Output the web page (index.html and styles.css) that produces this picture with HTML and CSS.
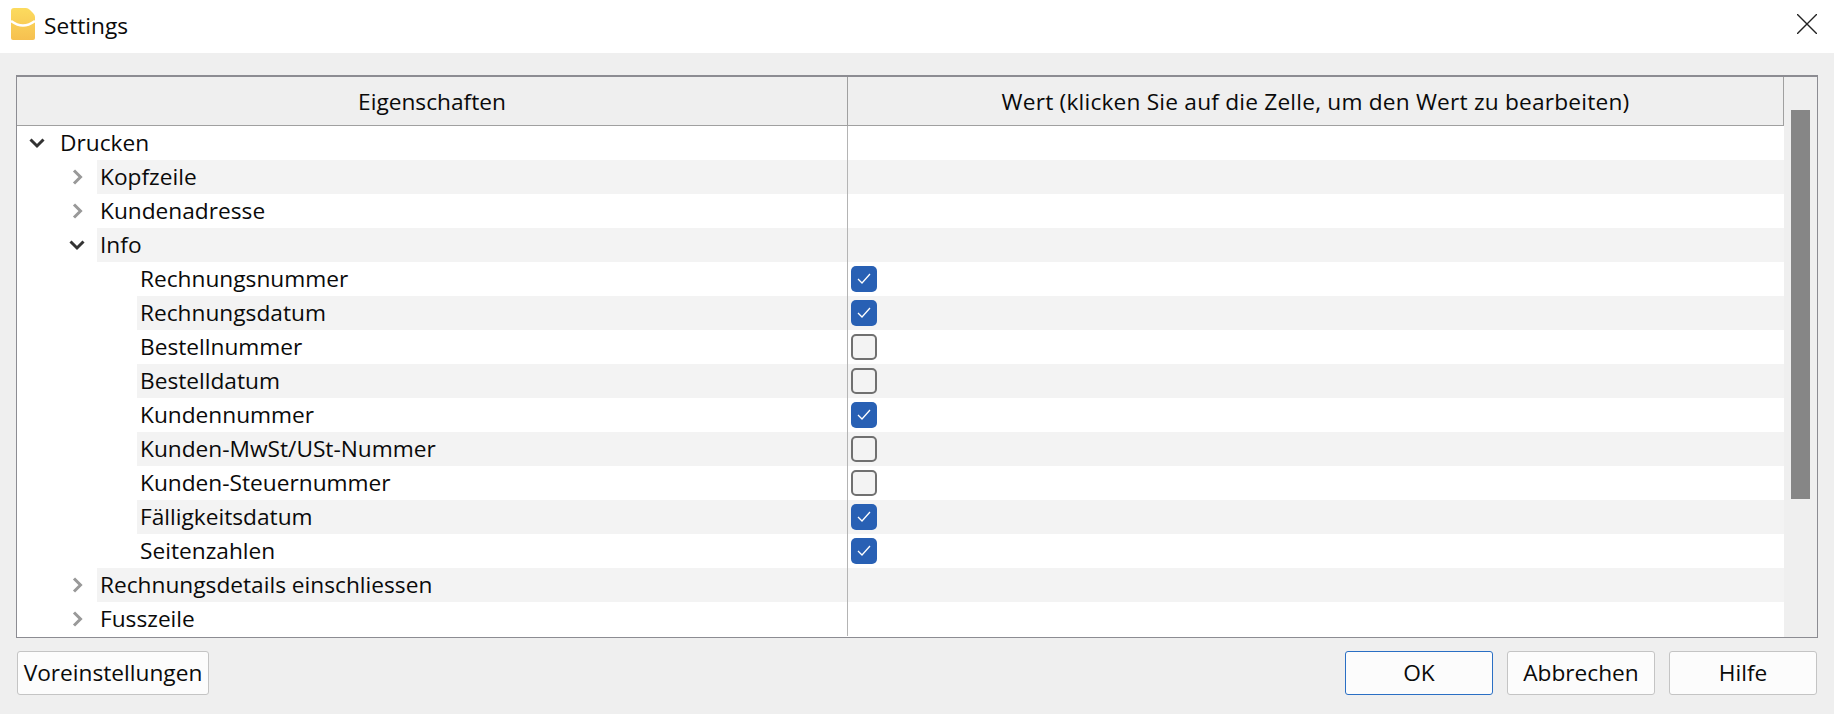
FILE: index.html
```html
<!DOCTYPE html>
<html>
<head>
  <title>Settings</title>
  <link rel="stylesheet" href="styles.css">
</head>
<body>
  <div class="titlebar">
    <svg class="app-icon" width="24" height="32" viewBox="0 0 24 32">
      <defs>
        <linearGradient id="appfill" x1="0" y1="0" x2="0" y2="1">
          <stop offset="0" stop-color="#fcdb5e"/>
          <stop offset="1" stop-color="#f6c050"/>
        </linearGradient>
      </defs>
      <path d="M3 0H15Q17 0 19 2L22 5Q24 7 24 9V30a2 2 0 0 1-2 2H2a2 2 0 0 1-2-2V3a3 3 0 0 1 3-3Z" fill="url(#appfill)"/>
      <path d="M0 13Q12 22 24 13" fill="none" stroke="#fff" stroke-width="2.5"/>
    </svg>
    <span class="title">Settings</span>
    <svg class="close" width="20" height="20" viewBox="0 0 20 20">
      <path d="M0 0L20 20M20 0L0 20" stroke="#222" stroke-width="1.4" fill="none"/>
    </svg>
  </div>

  <div class="dialog">
    <div class="table">
      <div class="main">
        <div class="head">
          <div class="col-name">Eigenschaften</div>
          <div class="col-value">Wert (klicken Sie auf die Zelle, um den Wert zu bearbeiten)</div>
        </div>
        <div class="row lvl0"><svg class="arrow open" width="18" height="16" viewBox="0 0 18 16"><path d="M2.5 4.5L9 11L15.5 4.5"/></svg><div class="name">Drucken</div><div class="value"></div></div>
        <div class="row lvl1"><svg class="arrow" width="18" height="16" viewBox="0 0 18 16"><path d="M6 1.5L12.5 8L6 14.5"/></svg><div class="name">Kopfzeile</div><div class="value"></div></div>
        <div class="row lvl1"><svg class="arrow" width="18" height="16" viewBox="0 0 18 16"><path d="M6 1.5L12.5 8L6 14.5"/></svg><div class="name">Kundenadresse</div><div class="value"></div></div>
        <div class="row lvl1"><svg class="arrow open" width="18" height="16" viewBox="0 0 18 16"><path d="M2.5 4.5L9 11L15.5 4.5"/></svg><div class="name">Info</div><div class="value"></div></div>
        <div class="row lvl2"><div class="name">Rechnungsnummer</div><div class="value"><span class="check on"><svg width="14" height="12" viewBox="0 0 14 12"><path d="M1 6L5 10L13 1"/></svg></span></div></div>
        <div class="row lvl2"><div class="name">Rechnungsdatum</div><div class="value"><span class="check on"><svg width="14" height="12" viewBox="0 0 14 12"><path d="M1 6L5 10L13 1"/></svg></span></div></div>
        <div class="row lvl2"><div class="name">Bestellnummer</div><div class="value"><span class="check"></span></div></div>
        <div class="row lvl2"><div class="name">Bestelldatum</div><div class="value"><span class="check"></span></div></div>
        <div class="row lvl2"><div class="name">Kundennummer</div><div class="value"><span class="check on"><svg width="14" height="12" viewBox="0 0 14 12"><path d="M1 6L5 10L13 1"/></svg></span></div></div>
        <div class="row lvl2"><div class="name">Kunden-MwSt/USt-Nummer</div><div class="value"><span class="check"></span></div></div>
        <div class="row lvl2"><div class="name">Kunden-Steuernummer</div><div class="value"><span class="check"></span></div></div>
        <div class="row lvl2"><div class="name">Fälligkeitsdatum</div><div class="value"><span class="check on"><svg width="14" height="12" viewBox="0 0 14 12"><path d="M1 6L5 10L13 1"/></svg></span></div></div>
        <div class="row lvl2"><div class="name">Seitenzahlen</div><div class="value"><span class="check on"><svg width="14" height="12" viewBox="0 0 14 12"><path d="M1 6L5 10L13 1"/></svg></span></div></div>
        <div class="row lvl1"><svg class="arrow" width="18" height="16" viewBox="0 0 18 16"><path d="M6 1.5L12.5 8L6 14.5"/></svg><div class="name">Rechnungsdetails einschliessen</div><div class="value"></div></div>
        <div class="row lvl1"><svg class="arrow" width="18" height="16" viewBox="0 0 18 16"><path d="M6 1.5L12.5 8L6 14.5"/></svg><div class="name">Fusszeile</div><div class="value"></div></div>
      </div>
      <div class="scrollbar"><div class="thumb"></div></div>
    </div>

    <div class="buttons">
      <button class="btn first">Voreinstellungen</button>
      <div class="right">
        <button class="btn wide default">OK</button>
        <button class="btn wide">Abbrechen</button>
        <button class="btn wide">Hilfe</button>
      </div>
    </div>
  </div>
</body>
</html>
```

FILE: styles.css
```css
* {
  box-sizing: border-box;
}

body {
  margin: 0;
  height: 714px;
  overflow: hidden;
  background-color: #efefef;
  font-family: "Open Sans", "Noto Sans", sans-serif;
  font-size: 22.7px;
  color: #0a0a0a;
}

.titlebar {
  display: flex;
  align-items: center;
  height: 53px;
  padding: 0 17px 5px 11px;
  background-color: #fff;
}

.app-icon {
  margin-right: 9px;
}

.title {
  flex: 1;
  margin-top: 3px;
  line-height: 32px;
}

.dialog {
  padding: 22px 16px 0 16px;
}

.table {
  display: flex;
  height: 563px;
  border: 1px solid #8c8c92;
  border-top-width: 2px;
  background-color: #efefef;
}

.main {
  width: 1767px;
  overflow: hidden;
  background-color: #fff;
}

.head {
  display: flex;
  height: 49px;
  border-bottom: 1px solid #a0a0a0;
  border-right: 1px solid #a0a0a0;
  background-color: #efefef;
}

.col-name {
  width: 831px;
  border-right: 1px solid #a0a0a0;
  text-align: center;
  line-height: 50px;
}

.col-value {
  flex: 1;
  text-align: center;
  line-height: 50px;
  letter-spacing: 0.2px;
}

.row {
  display: flex;
  height: 34px;
  line-height: 34px;
}

.row:nth-child(odd) .name,
.row:nth-child(odd) .value {
  background-color: #f3f3f3;
}

.name {
  flex: 1;
  white-space: nowrap;
  padding-left: 3px;
}

.value {
  display: flex;
  flex: none;
  align-items: center;
  width: 937px;
  padding-left: 3px;
  border-left: 1px solid #b4b4b4;
}

.lvl0 {
  padding-left: 11px;
}

.lvl0 .name {
  padding-left: 14px;
}

.lvl1 {
  padding-left: 51px;
}

.lvl2 {
  padding-left: 120px;
}

.arrow {
  flex: none;
  align-self: center;
  fill: none;
  stroke: #999;
  stroke-width: 3;
}

.lvl1 .arrow {
  margin-right: 11px;
}

.arrow.open {
  stroke: #333;
}

.check {
  display: flex;
  align-items: center;
  justify-content: center;
  width: 26px;
  height: 26px;
  border: 2px solid #707070;
  border-radius: 5px;
  background-color: #f3f3f3;
}

.check.on {
  border: none;
  background-color: #2860b4;
}

.check svg {
  fill: none;
  stroke: #fff;
  stroke-width: 1.3;
}

.scrollbar {
  flex: 1;
  padding: 33px 7px 0 7px;
}

.thumb {
  width: 19px;
  height: 389px;
  background-color: #868686;
}

.buttons {
  display: flex;
  justify-content: space-between;
  margin-top: 13px;
  padding: 0 1px;
}

.right {
  display: flex;
  gap: 14px;
}

.btn {
  height: 44px;
  padding: 0 0 1px;
  border: 1px solid #c4c4c4;
  border-radius: 3px;
  background-color: #fcfcfc;
  font: inherit;
  color: #0a0a0a;
}

.btn.first {
  width: 192px;
}

.btn.wide {
  width: 148px;
}

.btn.default {
  border-color: #2a6fc4;
}
```
